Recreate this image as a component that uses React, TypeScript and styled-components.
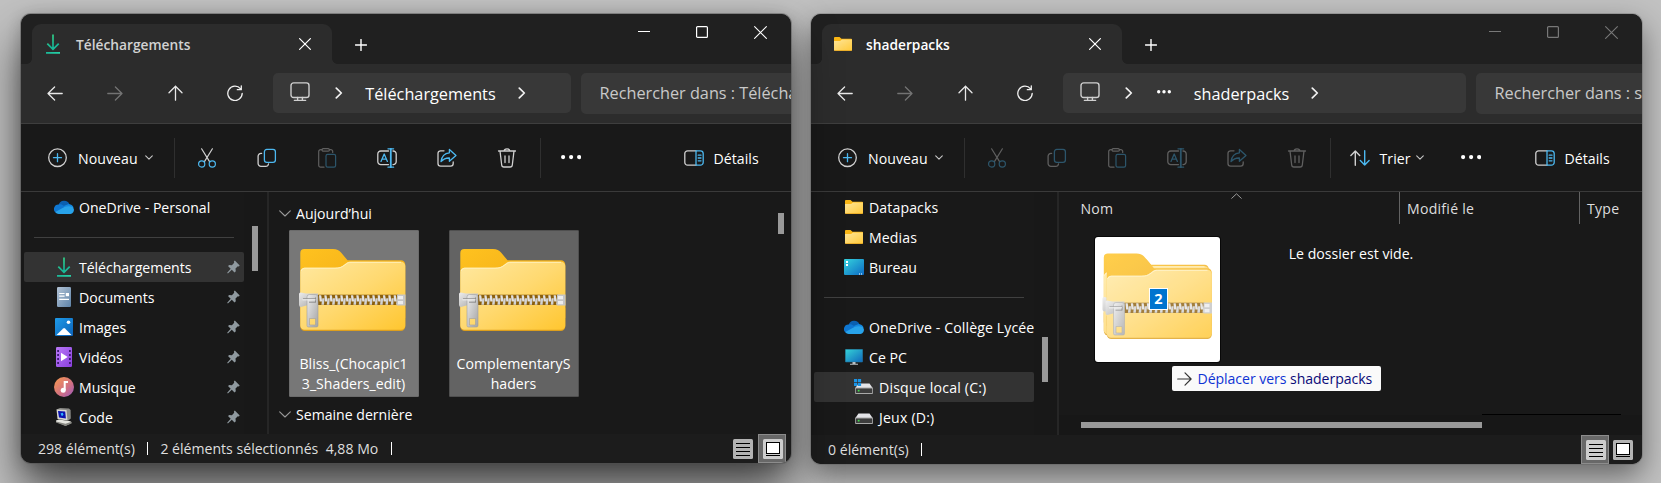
import React, { useId } from "react";
import styled, { createGlobalStyle } from "styled-components";

const GlobalStyle = createGlobalStyle`
  *, *::before, *::after { box-sizing: border-box; }
  body {
    margin: 0;
    background: #c1c1c1;
    overflow: hidden;
    font-family: "Open Sans", "Noto Sans", sans-serif;
    font-size: 14.1px;
    color: #fff;
  }
  svg { display: block; flex: none; }
`;

/* ---------- layout ---------- */

const Desktop = styled.main`
  display: flex;
  align-items: flex-start;
  gap: 20px;
  height: 483px;
  padding: 14px 19px 0 21px;
  overflow: hidden;
`;

const WindowShadow = styled.section<{ $width: number; $height: number; $active?: boolean }>`
  position: relative;
  z-index: ${(p) => (p.$active ? 1 : 0)};
  flex: none;
  width: ${(p) => p.$width}px;
  height: ${(p) => p.$height}px;
  border-radius: 10px;
  box-shadow: ${(p) =>
    p.$active
      ? "0 0 0 1px rgba(80,80,80,.45), 0 26px 46px rgba(0,0,0,.64), 0 2px 16px rgba(0,0,0,.2)"
      : "0 0 0 1px rgba(90,90,90,.3), 0 12px 30px rgba(0,0,0,.48)"};
`;

const Frame = styled.div`
  display: flex;
  flex-direction: column;
  width: 100%;
  height: 100%;
  overflow: hidden;
  border-radius: 10px;
  background: #191919;
`;

const TitleBar = styled.header`
  display: flex;
  height: 50px;
  padding-left: 11px;
  background: #202020;
`;

const Tab = styled.div`
  position: relative;
  display: flex;
  align-items: center;
  width: 300px;
  height: 40px;
  margin-top: 10px;
  padding-left: 11px;
  border-radius: 9px 9px 0 0;
  background: #2c2c2c;
  &::before, &::after {
    content: "";
    position: absolute;
    bottom: 0;
    width: 5px;
    height: 5px;
  }
  &::before { left: -5px; background: radial-gradient(circle at 0 0, transparent 4.5px, #2c2c2c 5px); }
  &::after { right: -5px; background: radial-gradient(circle at 100% 0, transparent 4.5px, #2c2c2c 5px); }
`;

const TabIcon = styled.span`
  display: flex;
  justify-content: center;
  width: 20px;
  margin-right: 13px;
`;

const TabTitle = styled.span<{ $bright?: boolean }>`
  flex: 1;
  padding-top: 2px;
  font-size: 13.75px;
  font-weight: 600;
  line-height: 20px;
  color: ${(p) => (p.$bright ? "#fff" : "#d2d2d2")};
`;

const TabClose = styled.span`
  margin: 0 21px 0 0;
`;

const NewTab = styled.span`
  margin: 25px 0 0 23px;
`;

const Caption = styled.div<{ $dim?: boolean }>`
  display: flex;
  gap: 46px;
  margin: 12px 24px 0 auto;
  color: ${(p) => (p.$dim ? "#787878" : "#fff")};
`;

const NavBar = styled.nav`
  display: flex;
  height: 60px;
  padding: 9px 0 0 4px;
  background: #2c2c2c;
  border-bottom: 1px solid #3e3e3e;
`;

const Cell = styled.span<{ $dim?: boolean }>`
  display: flex;
  flex: none;
  align-items: center;
  justify-content: center;
  width: 60px;
  height: 40px;
  opacity: ${(p) => (p.$dim ? 0.38 : 1)};
`;

const AddressBox = styled.div<{ $width: number }>`
  display: flex;
  flex: none;
  align-items: center;
  width: ${(p) => p.$width}px;
  height: 40px;
  margin-left: 8px;
  padding-left: 17px;
  border-radius: 5px;
  background: #383838;
  font-size: 16.25px;
`;

const AddressLabel = styled.span`
  padding-top: 1px;
`;

const Raised = styled.span`
  padding-bottom: 2px;
`;

const Spacer = styled.span<{ $size: number }>`
  flex: none;
  width: ${(p) => p.$size}px;
`;

const SearchBox = styled.div`
  flex: 1;
  height: 41px;
  margin-left: 10px;
  padding-left: 18.5px;
  overflow: hidden;
  border-radius: 5px 0 0 5px;
  background: #383838;
  color: #c9c9c9;
  font-size: 16.25px;
  line-height: 41px;
  white-space: nowrap;
`;

const CommandBar = styled.div`
  display: flex;
  align-items: center;
  height: 68px;
  padding-left: 27px;
  border-bottom: 1px solid #3a3a3a;
`;

const CommandButton = styled.span<{ $width: number }>`
  display: flex;
  flex: none;
  align-items: center;
  width: ${(p) => p.$width}px;
`;

const CommandLabel = styled.span<{ $gap: number }>`
  margin-left: ${(p) => p.$gap}px;
  padding-top: 1px;
  letter-spacing: 0.06px;
`;

const CommandSeparator = styled.span`
  flex: none;
  width: 1px;
  height: 40px;
  background: #2f2f2f;
`;

const DetailsButton = styled.span`
  display: flex;
  align-items: center;
  width: 107px;
  margin-left: auto;
`;

const Body = styled.div`
  display: flex;
  flex: 1;
  min-height: 0;
`;

const Sidebar = styled.aside`
  display: flex;
  width: 246px;
  padding-left: 3px;
  background: #181818;
  flex: none;
`;

const SidebarList = styled.div`
  width: 220px;
  overflow: hidden;
  background: #191919;
`;

const Splitter = styled.div`
  flex: none;
  width: 2px;
  background: #262626;
`;

const ScrollThumb = styled.div<{ $top: number; $height: number; $left?: number }>`
  width: 6px;
  height: ${(p) => p.$height}px;
  margin: ${(p) => p.$top}px 0 0 ${(p) => p.$left ?? 8}px;
  background: #999;
`;

const Row = styled.div<{ $selected?: boolean; $indent?: number }>`
  display: flex;
  align-items: center;
  height: 30px;
  padding: 0 4px 0 ${(p) => 30 + (p.$indent ?? 0)}px;
  border-radius: 2px;
  background: ${(p) => (p.$selected ? "#333" : "transparent")};
  white-space: nowrap;
`;

const RowIcon = styled.span`
  display: flex;
  flex: none;
  align-items: center;
  justify-content: center;
  width: 20px;
  height: 20px;
  margin-right: 5px;
`;

const RowLabel = styled.span<{ $spacing?: number }>`
  flex: 1;
  letter-spacing: ${(p) => p.$spacing ?? 0}px;
`;

const RowDivider = styled.div`
  height: 1px;
  margin: 15px 10px 14px;
  background: #404040;
`;

const Pane = styled.div`
  flex: 1;
  min-width: 0;
`;

const GroupList = styled.div`
  flex: 1;
  min-width: 0;
  padding: 9px 0 0 9.5px;
`;

const GroupHeader = styled.div`
  display: flex;
  align-items: center;
  gap: 5.5px;
  height: 24px;
`;

const Tiles = styled.div`
  display: flex;
  gap: 30px;
  margin: 5px 0 5px 10px;
`;

const Tile = styled.div<{ $hover?: boolean }>`
  width: 130px;
  height: 167px;
  padding-top: 17px;
  border: 1px solid ${(p) => (p.$hover ? "#6b6b6b" : "#4f4f4f")};
  border-radius: 1px;
  background: ${(p) => (p.$hover ? "#777" : "#636363")};
  text-align: center;
  line-height: 20px;
  letter-spacing: 0.03px;
  & > svg { margin: 0 auto 22px 9px; }
`;

const TileLine = styled.div`
  white-space: nowrap;
`;

const StatusBar = styled.footer`
  display: flex;
  flex: none;
  height: 29px;
  padding: 0 5px 0 17px;
  background: #1c1c1c;
  color: #dedede;
  line-height: 30px;
  white-space: pre;
`;

const StatusSeparator = styled.span<{ $right?: number }>`
  width: 1px;
  height: 13px;
  margin: 8px ${(p) => p.$right ?? 0}px 0 12.5px;
  background: #fff;
`;

const ViewSwitch = styled.span`
  display: flex;
  margin-left: auto;
`;

const ViewButton = styled.span<{ $on?: boolean }>`
  display: flex;
  align-items: center;
  justify-content: center;
  width: 28px;
  height: 29px;
  padding: ${(p) => (p.$on ? "1px 0 0 2px" : "0")};
  background: ${(p) => (p.$on ? "#686868" : "transparent")};
  border: 1px solid ${(p) => (p.$on ? "#8c8c8c" : "transparent")};
`;

const Columns = styled.div`
  display: flex;
  height: 32px;
  padding-left: 21.5px;
  color: #dedede;
  line-height: 34px;
`;

const Column = styled.div<{ $width?: number; $ruled?: boolean }>`
  position: relative;
  width: ${(p) => (p.$width ? p.$width + "px" : "auto")};
  padding-left: ${(p) => (p.$ruled ? 7 : 0)}px;
  border-left: ${(p) => (p.$ruled ? "1px solid #636363" : "none")};
  letter-spacing: 0.25px;
`;

const SortMark = styled.span`
  position: absolute;
  top: 1px;
  left: 150px;
`;

const EmptyText = styled.div`
  height: 20px;
  margin-top: 20px;
  padding-left: 1px;
  line-height: 20px;
  text-align: center;
`;

const ScrollLine = styled.div`
  display: flex;
  justify-content: flex-end;
  margin-top: 150px;
  padding-right: 21px;
  &::after { content: ""; width: 139px; height: 1px; background: #000; }
`;

const HorizontalTrack = styled.div`
  height: 20px;
  padding: 7px 0 0 22px;
  background: #171717;
`;

const HorizontalThumb = styled.div`
  width: 401px;
  height: 6px;
  background: #999;
`;

/* ---------- drag and drop overlay ---------- */

const DragPreview = styled.div`
  position: absolute;
  top: 223px;
  left: 284px;
  width: 125px;
  height: 125px;
  padding: 15px 0 0 7px;
  border-radius: 3px;
  background: #fff;
  box-shadow: 0 0 0 1px #080808;
`;

const DragCount = styled.span`
  position: absolute;
  top: 51px;
  left: 54px;
  width: 19px;
  height: 22px;
  border: 1px solid #fff;
  background: #0074cf;
  font-size: 14.5px;
  font-weight: 700;
  line-height: 20px;
  text-align: center;
`;

const DropHint = styled.div`
  position: absolute;
  top: 352px;
  left: 361px;
  display: flex;
  align-items: center;
  width: 209px;
  height: 25px;
  padding-left: 5px;
  border-radius: 2px;
  background: #fafafa;
  color: #0e33d4;
  letter-spacing: -0.06px;
  white-space: pre;
  & > svg { margin-right: 5.5px; }
  & > b { font-weight: 400; color: #0a0a78; }
`;

/* ---------- icons ---------- */

type IconProps = { w: number; h: number; sw?: number; color?: string; children: React.ReactNode };
const Icon = ({ w, h, sw = 1.25, color = "currentColor", children }: IconProps) => (
  <svg width={w} height={h} viewBox={`0 0 ${w} ${h}`} fill="none" stroke={color} strokeWidth={sw} strokeLinecap="round" strokeLinejoin="round">
    {children}
  </svg>
);

const BLUE = "#4cb8f0";
const GREY = "#d0d0d0";

const CrossIcon = ({ size, sw = 1.2 }: { size: number; sw?: number }) => (
  <Icon w={size} h={size} sw={sw}><path d={`M.6 .6L${size - 0.6} ${size - 0.6}M${size - 0.6} .6L.6 ${size - 0.6}`} /></Icon>
);
const PlusIcon = () => <Icon w={12} h={12} sw={1.4}><path d="M6 .5v11M.5 6h11" /></Icon>;
const MinimizeIcon = () => <svg width="12" height="12"><path d="M0 5.5h12" stroke="currentColor" /></svg>;
const MaximizeIcon = () => <Icon w={12} h={12} sw={1.2}><rect x=".6" y=".6" width="10.8" height="10.8" rx="1" /></Icon>;
const BackIcon = () => <Icon w={16} h={15} sw={1.3} color="#e8e8e8"><path d="M15.2 7.5H1M7.6 1L1 7.5l6.6 6.5" /></Icon>;
const ForwardIcon = () => <Icon w={16} h={15} sw={1.3} color="#e8e8e8"><path d="M.8 7.5H15M8.4 1L15 7.5 8.4 14" /></Icon>;
const UpIcon = () => <Icon w={15} h={16} sw={1.3} color="#e8e8e8"><path d="M7.5 15.2V1.2M1 7.8l6.5-6.6L14 7.8" /></Icon>;
const RefreshIcon = () => (
  <Icon w={16} h={16} sw={1.3} color="#f0f0f0"><path d="M15.2 8.3A7.2 7.2 0 1 1 13.6 3.8M14.3 .8v3.900h-4" /></Icon>
);
const MonitorIcon = () => (
  <Icon w={20} h={20} sw={1.4} color="#cfcfcf">
    <rect x="1" y=".9" width="18" height="14.6" rx="2.6" /><path d="M7.6 15.5v2.7M12.4 15.5v2.7M4.4 18.4h11.2" />
  </Icon>
);
const ChevronRight = () => <Icon w={8} h={12} sw={1.7} color="#f2f2f2"><path d="M1.3 1.2L6.3 6l-5 4.8" /></Icon>;
const ChevronDown = () => <Icon w={8} h={5} sw={1.1} color="#c8c8c8"><path d="M.7 .8L4 4.1 7.3 .8" /></Icon>;
const GroupChevron = () => <Icon w={12} h={7} sw={1.1} color="#9a9a9a"><path d="M.7 .9L6 6 11.3 .9" /></Icon>;
const SortChevron = () => <Icon w={11} h={6} sw={1} color="#9a9a9a"><path d="M.7 5.3L5.5 .8l4.8 4.5" /></Icon>;
const Dots = ({ r, gap }: { r: number; gap: number }) => (
  <svg width={gap * 2 + r * 2} height={r * 2} fill="#fff">
    {[0, 1, 2].map((i) => <circle key={i} cx={r + i * gap} cy={r} r={r} />)}
  </svg>
);

const NewIcon = () => (
  <Icon w={19} h={20} sw={1.3} color={GREY}><circle cx="9.5" cy="9.7" r="8.8" /><path d="M9.5 5.7v8M5.5 9.7h8" stroke={BLUE} /></Icon>
);
const CutIcon = () => (
  <Icon w={20} h={20} sw={1.2} color={GREY}>
    <path d="M4.6 .8l7.8 12.6M15.4 .8L7.6 13.4" />
    <g stroke={BLUE}><circle cx="4.7" cy="16" r="3.1" /><circle cx="15.3" cy="16" r="3.1" /></g>
  </Icon>
);
const CopyIcon = () => (
  <Icon w={20} h={20} sw={1.3} color={GREY}>
    <path d="M4.6 5.4H4a2.9 2.9 0 0 0-2.9 2.9v7.2A2.9 2.9 0 0 0 4 18.4h4.6a2.9 2.9 0 0 0 2.9-2.4" />
    <rect x="7.4" y="1.4" width="11" height="13" rx="2.4" stroke={BLUE} />
  </Icon>
);
const PasteIcon = () => (
  <Icon w={20} h={20} sw={1.2} color={GREY}>
    <path d="M7 19.2H3.6A1.9 1.9 0 0 1 1.7 17.3V3.6a1.9 1.9 0 0 1 1.9-1.9H5M12.4 1.7h1.4a1.9 1.9 0 0 1 1.9 1.9v.8" />
    <rect x="5" y=".7" width="7.4" height="2.4" rx="1.2" />
    <rect x="9" y="6.4" width="9.6" height="12.8" rx="1.6" stroke={BLUE} />
  </Icon>
);
const RenameIcon = () => (
  <Icon w={20} h={20} sw={1.3} color={GREY}>
    <path d="M11.5 3H4A3 3 0 0 0 .8 6v7.5A3 3 0 0 0 4 16.6h7.5M16 3a3 3 0 0 1 3.2 3v7.5a3 3 0 0 1-3.2 3.1" />
    <g stroke={BLUE}><path d="M4 13.4L7.2 6l3.2 7.4M5 11.2h4.4M11 .8h5.6M11 19.2h5.6" /><path d="M13.8 .8v18.4" strokeWidth="1.8" /></g>
  </Icon>
);
const ShareIcon = () => (
  <Icon w={20} h={20} sw={1.3} color={GREY}>
    <path d="M7 2.8H3.6A2.6 2.6 0 0 0 1 5.4v10.2a2.6 2.6 0 0 0 2.6 2.6h10a2.6 2.6 0 0 0 2.6-2.6V14" />
    <path d="M12.4 1.5L19 7.4l-6.6 5.8V10C8.6 9.8 6.2 11.2 4 13.6 4.6 8.8 7.6 5.2 12.4 4.8z" stroke={BLUE} />
  </Icon>
);
const TrashIcon = () => (
  <Icon w={20} h={20} sw={1.3} color={GREY}>
    <path d="M1.5 3h17M7.2 3a2.8 2.2 0 0 1 5.6 0M3 3l1.7 14a2.2 2.2 0 0 0 2.2 2h6.2a2.2 2.2 0 0 0 2.2-2L17 3M8 8v6.5M12 8v6.5" />
  </Icon>
);
const SortIcon = () => (
  <Icon w={20} h={16} sw={1.4} color={GREY}>
    <path d="M5.3 15.2V1M.9 5.4L5.3 1l4.4 4.4" /><path d="M14.7 .8V15M10.3 10.6l4.4 4.4 4.4-4.4" stroke={BLUE} />
  </Icon>
);
const DetailsIcon = () => (
  <Icon w={20} h={16} sw={1.3} color={GREY}>
    <path d="M12 .8H3.6A2.8 2.8 0 0 0 .8 3.6v8.8a2.8 2.8 0 0 0 2.8 2.8H12" />
    <path d="M12 .8h4.4a2.8 2.8 0 0 1 2.8 2.8v8.8a2.8 2.8 0 0 1-2.8 2.8H12zM14.2 5.2h2.8M14.2 8h2.8M14.2 10.8h2.8" stroke={BLUE} />
  </Icon>
);
const HintArrow = () => <Icon w={15} h={14} sw={1.2} color="#333"><path d="M.7 7h13.4M8 .9L14.1 7 8 13.1" /></Icon>;

const DownloadIcon = () => {
  const id = useId();
  return (
    <svg width="14" height="20" viewBox="0 0 14 20" fill="none" stroke={`url(#${id})`} strokeWidth="1.7">
      <linearGradient id={id} gradientUnits="userSpaceOnUse" x1="0" y1="0" x2="12" y2="20">
        <stop offset="0" stopColor="#3ddc84" /><stop offset=".6" stopColor="#16b193" /><stop offset="1" stopColor="#27d3a8" />
      </linearGradient>
      <path d="M7 .5v14.5M1.3 9.6L7 15.3l5.7-5.7M0 18.9h14" />
    </svg>
  );
};

const PinIcon = () => (
  <svg width="13" height="14" viewBox="0 0 13 14" fill="#8f999f">
    <path d="M7.8 .5l4.9 4.9-.9 1-1-.2-2.3 2.4.3 2.7-1.3 1.2-2.7-2.7L.9 13.5l-.7-.7 3.5-4-2.7-2.7 1.3-1.2 2.6.3 2.3-2.4-.3-1.3z" />
  </svg>
);

const OneDriveIcon = () => (
  <svg width="20" height="14" viewBox="0 0 20 14">
    <path d="M4.6 5.2A5.7 5.7 0 0 1 15.5 4.6l-4.3 3.4z" fill="#0b5fb0" />
    <path d="M4.6 4.4c2.2-.4 3.9.3 5.2 1.4l4 3L2.3 13A4.6 4.6 0 0 1 4.6 4.4z" fill="#0f77d2" />
    <path d="M9.6 6l5.2-1.9c2.6.2 4.4 2 4.8 3.7L12 9z" fill="#1387df" />
    <path d="M1.3 11.9l9.1-5c3-.8 6-.8 8.2 0 2.4 2.3 1.5 6.7-2.2 7H4.6c-1.3 0-2.5-.7-3.3-2z" fill="#28a3ea" />
  </svg>
);

const FolderIcon = () => {
  const id = useId();
  return (
    <svg width="18" height="14" viewBox="0 0 18 14">
      <linearGradient id={id} x1="0" y1="0" x2="1" y2="1"><stop offset="0" stopColor="#ffe69a" /><stop offset="1" stopColor="#ffc938" /></linearGradient>
      <path d="M0 .9Q0 0 .9 0H5.5L7.5 1.7H17.2q.8 0 .8.8V6H0z" fill="#fbb715" />
      <path d="M0 4H6L8 2.6H18V13q0 1-1 1H1q-1 0-1-1z" fill={`url(#${id})`} />
      <path d="M.5 13.6h17" stroke="#e3a21d" strokeWidth=".8" />
    </svg>
  );
};

const DesktopIcon = () => {
  const id = useId();
  return (
    <svg width="20" height="16" viewBox="0 0 20 16">
      <linearGradient id={id} x1="0" y1="0" x2="1" y2="1"><stop offset="0" stopColor="#35d3dd" /><stop offset="1" stopColor="#0c6ac4" /></linearGradient>
      <rect width="20" height="16" rx="1" fill={`url(#${id})`} />
      <path d="M2 2h2v2H2zM2 5h2v2H2zM15 14.5h1v1h-1zM17 14.5h1v1h-1z" fill="#fff" />
    </svg>
  );
};

const ComputerIcon = () => {
  const id = useId();
  return (
    <svg width="18" height="16" viewBox="0 0 18 16">
      <linearGradient id={id} x1="0" y1="0" x2="1" y2="1"><stop offset="0" stopColor="#35d3d6" /><stop offset="1" stopColor="#1068bd" /></linearGradient>
      <rect x=".3" y=".3" width="17.4" height="12.7" rx=".6" fill={`url(#${id})`} stroke="#23749a" strokeWidth=".6" />
      <path d="M7.5 13h3v1.7h2.5v1H5v-1h2.5z" fill="#b9c0c4" />
    </svg>
  );
};

const DriveIcon = ({ system }: { system?: boolean }) => (
  <svg width="20" height="16" viewBox="-1 0 20 16">
    <path d="M3.5 4.5h11L18 9.5H0z" fill="#e4e4e8" />
    <rect y="8.5" width="18" height="6.5" rx="1" fill="#a9a9a9" />
    <rect x=".8" y="9.5" width="16.4" height="4.5" rx=".5" fill="#3d3d3d" />
    <rect x="2.8" y="10.8" width="1.7" height="1.7" fill="#3fe04a" />
    {system && <path d="M-1 0h3.2v3.2H-1zM2.9 0h3.2v3.2H2.9zM-1 3.9h3.2v3.2H-1zM2.9 3.9h3.2v3.2H2.9z" fill="#1a94e6" />}
  </svg>
);

const DocumentIcon = () => {
  const id = useId();
  return (
    <svg width="14" height="20" viewBox="0 0 14 20">
      <linearGradient id={id} x1="0" y1="0" x2="1" y2="1"><stop offset="0" stopColor="#b4c4d6" /><stop offset="1" stopColor="#5e83a8" /></linearGradient>
      <rect width="14" height="20" rx="1.2" fill={`url(#${id})`} />
      <path d="M2.2 6.5h5.4M2.2 9.2h5.4M2.2 12.4h9.8" stroke="#fff" strokeWidth="1.2" />
      <rect x="8.8" y="6" width="3.2" height="3.2" fill="#fff" />
    </svg>
  );
};

const PicturesIcon = () => {
  const id = useId();
  return (
    <svg width="18" height="18" viewBox="0 0 18 18">
      <linearGradient id={id} x1="0" y1="0" x2="1" y2="1"><stop offset="0" stopColor="#1e9be9" /><stop offset="1" stopColor="#0c62b8" /></linearGradient>
      <rect width="18" height="18" rx="1" fill={`url(#${id})`} />
      <path d="M1.5 17l6.7-6.6q.9-.8 1.8 0l6.5 6.6z" fill="#fff" /><circle cx="13.5" cy="4.3" r="1.8" fill="#fff" />
    </svg>
  );
};

const VideosIcon = () => {
  const id = useId();
  return (
    <svg width="16" height="20" viewBox="0 0 16 20">
      <linearGradient id={id} x1="0" y1="0" x2="1" y2="1"><stop offset="0" stopColor="#b878f6" /><stop offset="1" stopColor="#8a3fe0" /></linearGradient>
      <rect width="16" height="20" rx="1.2" fill={`url(#${id})`} />
      {[3, 7, 11, 15].map((y) => <path key={y} d={`M1.200 ${y}h1.800v2H1.200zM13 ${y}h1.800v2H13z`} fill="#3c1a70" />)}
      <path d="M5 5.8l6.7 4.2L5 14.3z" fill="#fff" />
    </svg>
  );
};

const MusicIcon = () => {
  const id = useId();
  return (
    <svg width="20" height="20" viewBox="0 0 20 20">
      <linearGradient id={id} x1="0" y1="0" x2="1" y2="1"><stop offset="0" stopColor="#f99a4c" /><stop offset=".6" stopColor="#cf6f84" /><stop offset="1" stopColor="#9a5ac0" /></linearGradient>
      <circle cx="10" cy="10" r="10" fill={`url(#${id})`} />
      <path d="M10.7 13V5h3.3" fill="none" stroke="#fff" strokeWidth="2" /><circle cx="9.2" cy="13.2" r="2.5" fill="#fff" />
    </svg>
  );
};

const CodeIcon = () => (
  <svg width="18" height="18" viewBox="0 0 18 18">
    <path d="M1.5 1.4L5 0l9 .6 1.6 1.4.2 8.5-2.8 2.3z" fill="#8a8a86" />
    <path d="M1.5 1.4L11.5 2l1 10.6L2.5 11z" fill="#d8d8d2" />
    <path d="M3 3l7.2.5.7 7L4 9.6z" fill="#0a12b0" />
    <path d="M5.5 5.6l2.2-.8.8 1.9-1.6 1.5z" fill="#2fb4ff" />
    <path d="M1 12.5l3-1 11.5 1.8 1 1.7-6 2.8L1 13.8z" fill="#e6e6e0" />
    <path d="M10.500 15.800l6-2v1.800l-6 2.400L1 14.500v-1z" fill="#868680" />
  </svg>
);

const ListViewIcon = ({ bright }: { bright?: boolean }) => (
  <svg width="20" height="20">
    <rect width="20" height="20" rx="1.5" fill={bright ? "#cdcdcd" : "#b3b3b3"} />
    <path d="M3 4.5h14M3 8.5h14M3 12.5h14M3 16.5h14" stroke="#000" />
  </svg>
);
const LargeViewIcon = ({ bright }: { bright?: boolean }) => (
  <svg width="20" height="20">
    <rect width="20" height="20" rx="1.5" fill={bright ? "#cdcdcd" : "#b3b3b3"} />
    <rect x="3.5" y="3.5" width="13" height="11" fill="#fff" stroke="#000" /><path d="M3 16.5h14" stroke="#000" />
  </svg>
);

/* Zipped folder artwork, 108 x 84 units */
const ZipArt = ({ id }: { id: string }) => {
  const teeth = Array.from({ length: 15 }, (_, i) => 20 + i * 5.33);
  return (
    <g>
      <path d="M1.3 5a4 4 0 0 1 4-4H34c4 0 6 1.2 8 3.5l6.5 7.7H102a4.3 4.3 0 0 1 4.3 4.3V70H1.3z" fill={`url(#${id}b)`} />
      <path d="M1.3 60v18.5a4.5 4.5 0 0 0 4.5 4.5h96a4.5 4.5 0 0 0 4.5-4.5V60z" fill="#dd9f1d" />
      <path d="M1.3 24a4.3 4.3 0 0 1 4.3-4.3H36c4 0 6-.6 9-3l2-1.5c1.5-1.2 2.5-1.500 5-1.500h50a4.300 4.300 0 0 1 4.300 4.300v59.500a4.300 4.300 0 0 1-4.300 4.300H5.600a4.300 4.300 0 0 1-4.300-4.300z" fill={`url(#${id}f)`} />
      <path d="M2 23a4 4 0 0 1 3.600-2.800H36c4 0 6.500-.7 9.500-3l2-1.500c1.300-1 2.500-1.400 4.500-1.400h50" fill="none" stroke="#fff3c4" strokeWidth=".9" />
      <rect x="18" y="46.7" width="81" height="10.3" fill="#8b5f0c" />
      {teeth.map((x) => (
        <g key={x}>
          <path d={`M${x} 47.200h2.200l1 6.300h-2.600z`} fill="#e2e2e2" />
          <path d={`M${x + 3.3} 50.200h2.200l-.5 6.500h-2.600z`} fill="#d3d3d3" />
        </g>
      ))}
      <path d="M98 46.5h8.500v11H98z" fill="#c4c4c4" /><path d="M99 48h5v3.200h-5zM99 53h5v3.200h-5z" fill="#ececec" />
      <path d="M0 46q0-1.500 1.500-1.500L7 45.500h12V57H9L2 59Q0 59 0 57z" fill={`url(#${id}m)`} />
      <path d="M8 49q0-2.500 2.500-2.500h6Q19 46.500 19 49V77.500q0 1.500-1.500 1.500h-8Q8 79 8 77.500zM10.500 70.500v6.500h6v-6.500z" fillRule="evenodd" fill={`url(#${id}m)`} stroke="#a0a0a0" strokeWidth=".6" />
      <path d="M4 50.8h12.5v3.400H10M16.500 49.500v5" fill="none" stroke="#8d8d8d" strokeWidth="1" />
      <path d="M3.5 51.8h13" stroke="#f4f4f4" strokeWidth="1" />
    </g>
  );
};

const ZipDefs = ({ id }: { id: string }) => (
  <defs>
    <linearGradient id={`${id}b`} x1="0" y1="0" x2="1" y2="1"><stop offset="0" stopColor="#ffc21f" /><stop offset="1" stopColor="#eba315" /></linearGradient>
    <linearGradient id={`${id}f`} x1="0" y1="0" x2="1" y2="1"><stop offset="0" stopColor="#ffe8a0" /><stop offset=".5" stopColor="#ffd970" /><stop offset="1" stopColor="#ffc62f" /></linearGradient>
    <linearGradient id={`${id}m`} x1="0" y1="0" x2="1" y2="1"><stop offset="0" stopColor="#ececec" /><stop offset="1" stopColor="#a4a4a4" /></linearGradient>
  </defs>
);

const ZipFolder = () => {
  const id = useId();
  return <svg width="108" height="84" viewBox="0 0 108 84"><ZipDefs id={id} /><ZipArt id={id} /></svg>;
};

const ZipStack = () => {
  const id = useId();
  return (
    <svg width="112" height="90" viewBox="0 0 112 90" opacity=".8">
      <ZipDefs id={id} />
      <g transform="translate(.5 .5)"><ZipArt id={id} /></g>
      <g transform="translate(3.5 4)"><ZipArt id={id} /></g>
    </svg>
  );
};

/* ---------- shared window chrome ---------- */

const Header = ({ icon, title, active }: { icon: React.ReactNode; title: string; active?: boolean }) => (
  <TitleBar>
    <Tab>
      <TabIcon>{icon}</TabIcon>
      <TabTitle $bright={!active}>{title}</TabTitle>
      <TabClose><CrossIcon size={12} /></TabClose>
    </Tab>
    <NewTab><PlusIcon /></NewTab>
    <Caption $dim={!active}><MinimizeIcon /><MaximizeIcon /><CrossIcon size={13} sw={1.1} /></Caption>
  </TitleBar>
);

type NavigationProps = { width: number; collapsed?: boolean; place: string; search: string };
const Navigation = ({ width, collapsed, place, search }: NavigationProps) => (
  <NavBar>
    <Cell><BackIcon /></Cell>
    <Cell $dim><ForwardIcon /></Cell>
    <Cell><UpIcon /></Cell>
    <Cell><RefreshIcon /></Cell>
    <AddressBox $width={width}>
      <Raised><MonitorIcon /></Raised>
      <Spacer $size={24.5} />
      <ChevronRight />
      {collapsed && <><Spacer $size={24.5} /><Raised><Dots r={1.7} gap={5.3} /></Raised></>}
      <Spacer $size={22.8} />
      <AddressLabel>{place}</AddressLabel>
      <Spacer $size={22.2} />
      <ChevronRight />
    </AddressBox>
    <SearchBox>{search}</SearchBox>
  </NavBar>
);

const Commands = ({ disabled, sortable }: { disabled?: boolean; sortable?: boolean }) => (
  <CommandBar>
    <CommandButton $width={126}>
      <NewIcon />
      <CommandLabel $gap={11}>Nouveau</CommandLabel>
      <Spacer $size={7} />
      <ChevronDown />
    </CommandButton>
    <CommandSeparator />
    <Spacer $size={2} />
    {[CutIcon, CopyIcon, PasteIcon, RenameIcon, ShareIcon, TrashIcon].map((Glyph, i) => (
      <Cell key={i} $dim={disabled || i === 2}><Glyph /></Cell>
    ))}
    <Spacer $size={3} />
    <CommandSeparator />
    {sortable && (
      <CommandButton $width={110}>
        <Spacer $size={19} />
        <SortIcon />
        <CommandLabel $gap={9.5}>Trier</CommandLabel>
        <Spacer $size={5.8} />
        <ChevronDown />
      </CommandButton>
    )}
    <Cell><Dots r={2.1} gap={8} /></Cell>
    <DetailsButton><DetailsIcon /><CommandLabel $gap={9.5}>Détails</CommandLabel></DetailsButton>
  </CommandBar>
);

/* ---------- windows ---------- */

const pinned: [string, () => React.JSX.Element][] = [
  ["Téléchargements", DownloadIcon],
  ["Documents", DocumentIcon],
  ["Images", PicturesIcon],
  ["Vidéos", VideosIcon],
  ["Musique", MusicIcon],
  ["Code", CodeIcon],
];

const DownloadsWindow = () => (
  <WindowShadow $width={770} $height={449} $active>
    <Frame>
      <Header icon={<DownloadIcon />} title="Téléchargements" active />
      <Navigation width={298} place="Téléchargements" search="Rechercher dans : Téléchargements" />
      <Commands />
      <Body>
        <Sidebar>
          <SidebarList>
            <Row><RowIcon><OneDriveIcon /></RowIcon><RowLabel>OneDrive - Personal</RowLabel></Row>
            <RowDivider />
            {pinned.map(([label, Glyph], i) => (
              <Row key={label} $selected={i === 0}>
                <RowIcon><Glyph /></RowIcon>
                <RowLabel $spacing={i === 0 ? -0.05 : 0}>{label}</RowLabel>
                <PinIcon />
              </Row>
            ))}
          </SidebarList>
          <ScrollThumb $top={34} $height={45} />
        </Sidebar>
        <Splitter />
        <GroupList>
          <GroupHeader><GroupChevron />Aujourd’hui</GroupHeader>
          <Tiles>
            <Tile $hover><ZipFolder /><TileLine>Bliss_(Chocapic1</TileLine><TileLine>3_Shaders_edit)</TileLine></Tile>
            <Tile><ZipFolder /><TileLine>ComplementaryS</TileLine><TileLine>haders</TileLine></Tile>
          </Tiles>
          <GroupHeader><GroupChevron />Semaine dernière</GroupHeader>
        </GroupList>
        <ScrollThumb $top={21} $height={21} $left={0} />
        <Spacer $size={7} />
      </Body>
      <StatusBar>
        298 élément(s)
        <StatusSeparator $right={12} />
        {"2 éléments sélectionnés  4,88 Mo"}
        <StatusSeparator />
        <ViewSwitch>
          <ViewButton><ListViewIcon /></ViewButton>
          <Spacer $size={1} />
          <ViewButton $on><LargeViewIcon bright /></ViewButton>
        </ViewSwitch>
      </StatusBar>
    </Frame>
  </WindowShadow>
);

const ShaderpacksWindow = () => (
  <WindowShadow $width={831} $height={450}>
    <Frame>
      <Header icon={<FolderIcon />} title="shaderpacks" />
      <Navigation width={403} collapsed place="shaderpacks" search="Rechercher dans : shaderpacks" />
      <Commands disabled sortable />
      <Body>
        <Sidebar>
          <SidebarList>
            <Row><RowIcon><FolderIcon /></RowIcon><RowLabel $spacing={0.12}>Datapacks</RowLabel></Row>
            <Row><RowIcon><FolderIcon /></RowIcon><RowLabel $spacing={0.12}>Medias</RowLabel></Row>
            <Row><RowIcon><DesktopIcon /></RowIcon><RowLabel>Bureau</RowLabel></Row>
            <RowDivider />
            <Row><RowIcon><OneDriveIcon /></RowIcon><RowLabel $spacing={0.12}>OneDrive - Collège Lycée</RowLabel></Row>
            <Row><RowIcon><ComputerIcon /></RowIcon><RowLabel>Ce PC</RowLabel></Row>
            <Row $indent={10} $selected><RowIcon><DriveIcon system /></RowIcon><RowLabel $spacing={0.2}>Disque local (C:)</RowLabel></Row>
            <Row $indent={10}><RowIcon><DriveIcon /></RowIcon><RowLabel $spacing={0.2}>Jeux (D:)</RowLabel></Row>
          </SidebarList>
          <ScrollThumb $top={145} $height={45} />
        </Sidebar>
        <Splitter />
        <Pane>
          <Columns>
            <Column $width={318.5}>Nom<SortMark><SortChevron /></SortMark></Column>
            <Column $width={180} $ruled>Modifié le</Column>
            <Column $ruled>Type</Column>
          </Columns>
          <EmptyText>Le dossier est vide.</EmptyText>
          <ScrollLine />
          <HorizontalTrack><HorizontalThumb /></HorizontalTrack>
        </Pane>
      </Body>
      <StatusBar>
        0 élément(s)
        <StatusSeparator />
        <ViewSwitch>
          <ViewButton $on><ListViewIcon bright /></ViewButton>
          <ViewButton><LargeViewIcon /></ViewButton>
        </ViewSwitch>
      </StatusBar>
    </Frame>
    <DragPreview><ZipStack /><DragCount>2</DragCount></DragPreview>
    <DropHint><HintArrow />Déplacer vers <b>shaderpacks</b></DropHint>
  </WindowShadow>
);

export default function App() {
  return (
    <>
      <GlobalStyle />
      <Desktop>
        <DownloadsWindow />
        <ShaderpacksWindow />
      </Desktop>
    </>
  );
}
